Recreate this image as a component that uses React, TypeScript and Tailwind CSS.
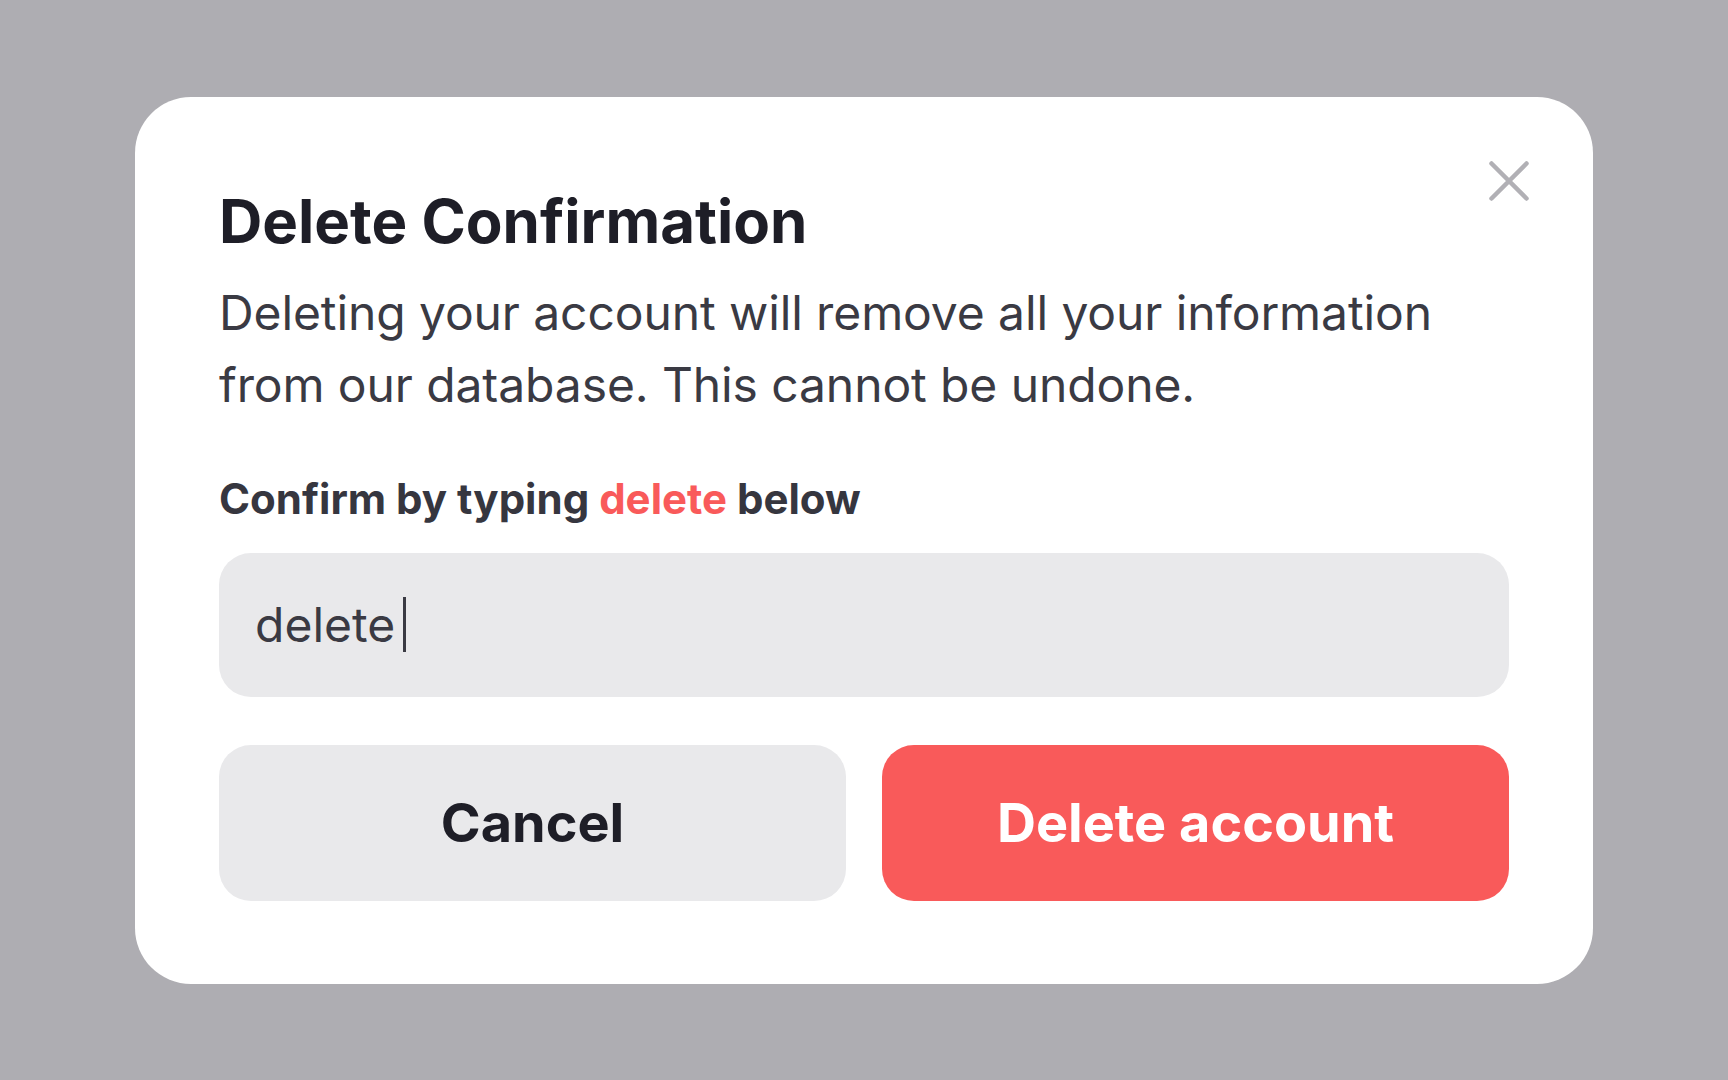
/* ============================================
   Delete confirmation dialog
   ============================================ */

function CloseIcon() {
  return (
    <svg viewBox="0 0 40 40" className="h-10 w-10" fill="none">
      <path
        d="M2.5 2.5L37.5 37.5M37.5 2.5L2.5 37.5"
        stroke="#b1b0b5"
        strokeWidth={4.5}
        strokeLinecap="round"
      />
    </svg>
  );
}

export default function App() {
  return (
    <div
      className="min-h-screen w-full bg-[#aeadb2] flex items-center justify-center"
      style={{ fontFamily: 'Inter, "Noto Sans", sans-serif' }}
    >
      <div className="relative w-[1458px] bg-white rounded-[56px] px-[84px] pt-[88px] pb-[83px]">
        {/* ---- close ---- */}
        <button className="absolute top-[64px] right-[64px]" aria-label="Close">
          <CloseIcon />
        </button>

        {/* ---- header ---- */}
        <h1 className="text-[60px] leading-[72px] font-bold text-[#1e1e27]">
          Delete Confirmation
        </h1>
        <p className="mt-[20px] text-[48px] leading-[72px] tracking-[-0.1px] text-[#3a3a43]">
          Deleting your account will remove all your information
          <br />
          from our database. This cannot be undone.
        </p>

        {/* ---- confirm field ---- */}
        <div className="mt-[54px] text-[42px] leading-[48px] font-bold text-[#36363f]">
          Confirm by typing <span className="text-[#f95a5a]">delete</span> below
        </div>
        <div className="mt-[30px] h-[144px] rounded-[32px] bg-[#e9e9eb] pl-[36px] flex items-center">
          <span className="text-[48px] leading-[72px] text-[#3a3a43]">delete</span>
          <span className="ml-[8px] h-[55px] w-[3px] bg-[#3a3a43]" />
        </div>

        {/* ---- actions ---- */}
        <div className="mt-[48px] grid grid-cols-2 gap-[36px]">
          <button className="h-[156px] rounded-[32px] bg-[#e9e9eb] text-[54px] font-bold text-[#1e1e27]">
            Cancel
          </button>
          <button className="h-[156px] rounded-[32px] bg-[#f95a5a] text-[54px] font-bold text-white">
            Delete account
          </button>
        </div>
      </div>
    </div>
  );
}
